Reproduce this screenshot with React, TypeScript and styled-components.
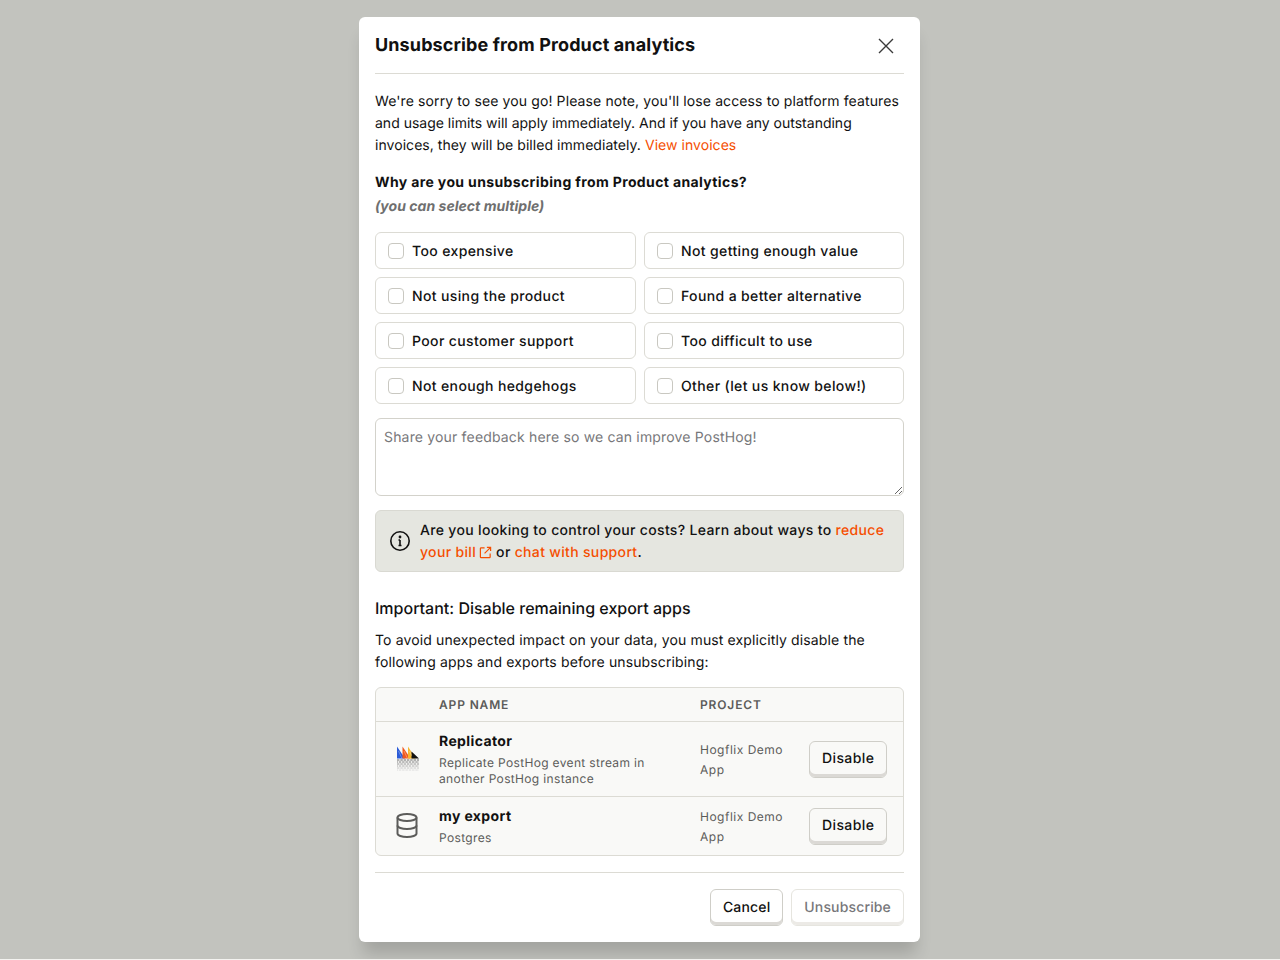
import React from "react";
import styled, { createGlobalStyle } from "styled-components";

const Global = createGlobalStyle`
  html, body { margin: 0; padding: 0; background: #f3f3f0; }
  body { font-family: Inter, "Liberation Sans", sans-serif; font-size: 14px; color: #111; text-rendering: geometricPrecision; }
  textarea, button { text-rendering: geometricPrecision; }
  * { box-sizing: border-box; }
`;

const Overlay = styled.div`
  height: 959px;
  background: #c2c3be;
  display: flex;
  justify-content: center;
  align-items: flex-start;
  padding-top: 17px;
  overflow: hidden;
`;

const Modal = styled.div`
  width: 561px;
  margin-left: -1px;
  height: 925px;
  background: #fff;
  border-radius: 6px;
  padding: 0 16px;
  box-shadow: 0 16px 16px -4px rgba(0, 0, 0, 0.16);
`;

const Header = styled.header`
  height: 57px;
  display: flex;
  align-items: center;
  justify-content: space-between;
  border-bottom: 1px solid #dcdbd4;
  padding-bottom: 1px;
`;

const Title = styled.h3`
  margin: 0;
  padding-top: 3px;
  font-size: 18px;
  line-height: 24px;
  font-weight: 700;
  letter-spacing: 0.12px;
  color: #111;
`;

const CloseButton = styled.button`
  width: 24px;
  height: 24px;
  margin: 2px 6px 0 0;
  padding: 0;
  background: none;
  border: none;
  color: #3b3b3b;
  display: flex;
  align-items: center;
  justify-content: center;
`;

const Intro = styled.p`
  margin: 17px 0 0;
  line-height: 22px;
  color: #111;
`;

const IntroLine = styled.span<{ $ls: number }>`
  display: block;
  white-space: nowrap;
  letter-spacing: ${(p) => p.$ls}px;
`;

const Link = styled.a`
  color: #f54e00;
  text-decoration: none;
`;

const Question = styled.h4`
  margin: 15px 0 0;
  font-size: 14px;
  line-height: 22px;
  font-weight: 700;
  letter-spacing: 0.37px;
`;

const Hint = styled.div`
  margin-top: 2px;
  font-size: 14px;
  line-height: 22px;
  font-weight: 700;
  font-style: italic;
  letter-spacing: 0.04px;
  color: #6f6f6f;
`;

const ReasonGrid = styled.div`
  margin-top: 14px;
  display: grid;
  grid-template-columns: 261px 260px;
  column-gap: 8px;
  row-gap: 8px;
`;

const Reason = styled.label`
  height: 37px;
  display: flex;
  align-items: center;
  gap: 8px;
  padding: 0 12px;
  background: #fff;
  border: 1px solid #dcdbd4;
  border-radius: 6px;
  font-weight: 500;
  letter-spacing: 0.37px;
  color: #111;
`;

const ReasonText = styled.span`
  padding-top: 2px;
`;

const Box = styled.span`
  width: 16px;
  height: 16px;
  border: 1px solid #c9c8c1;
  border-radius: 4px;
  background: #fff;
`;

const Feedback = styled.textarea`
  display: block;
  width: 100%;
  height: 78px;
  margin-top: 14px;
  padding: 8px;
  border: 1px solid #d3d2cb;
  border-radius: 6px;
  font: 400 14px/22px Inter, "Liberation Sans", sans-serif;
  letter-spacing: 0.17px;
  &::placeholder { color: #77777a; opacity: 1; }
`;

const Notice = styled.div`
  margin-top: 14px;
  height: 62px;
  display: flex;
  align-items: center;
  gap: 9px;
  padding: 0 13px;
  background: #e5e6e0;
  border: 1px solid #d9d9d2;
  border-radius: 6px;
  line-height: 22px;
  font-weight: 500;
  letter-spacing: 0.33px;
`;

const NoticeText = styled.div`
  flex: 1;
  padding-top: 2px;
`;

const ExternalIcon = styled.svg`
  width: 13px;
  height: 13px;
  vertical-align: -2px;
  margin-left: 3px;
`;

const SectionTitle = styled.h4`
  margin: 24px 0 0;
  font-size: 16px;
  line-height: 24px;
  font-weight: 500;
`;

const SectionText = styled.p`
  margin: 10px 0 0;
  line-height: 22px;
  letter-spacing: 0.13px;
`;

const Table = styled.div`
  margin-top: 13px;
  border: 1px solid #dcdbd4;
  border-radius: 6px;
  background: #f9f9f7;
  overflow: hidden;
`;

const Row = styled.div<{ $h: number }>`
  display: grid;
  grid-template-columns: 63px 261px 109px 1fr;
  align-items: center;
  height: ${(p) => p.$h}px;
  & + & { border-top: 1px solid #dcdbd4; }
`;

const HeadCell = styled.div`
  font-size: 12px;
  font-weight: 600;
  letter-spacing: 0.85px;
  color: #5c5c5a;
`;

const IconCell = styled.div`
  display: flex;
  justify-content: center;
`;

const AppName = styled.div`
  font-size: 14px;
  line-height: 22px;
  font-weight: 700;
  letter-spacing: 0.38px;
`;

const AppDesc = styled.div`
  font-size: 12px;
  line-height: 16px;
  letter-spacing: 0.34px;
  color: #5c5c5a;
  margin-top: 2px;
  padding-right: 24px;
`;

const ProjectCell = styled.div`
  font-size: 12px;
  line-height: 20px;
  letter-spacing: 0.5px;
  color: #5c5c5a;
  width: 92px;
  padding-top: 2px;
`;

const ActionCell = styled.div`
  display: flex;
  justify-content: flex-end;
  padding-right: 16px;
`;

const Button = styled.button<{ $disabled?: boolean; $bg?: string; $ls?: number }>`
  height: 37px;
  padding: 0 12px;
  background: ${(p) => p.$bg ?? "#fff"};
  border: 1px solid ${(p) => (p.$disabled ? "#e6e5df" : "#cfcec8")};
  border-radius: 6px;
  box-shadow: inset 0 -3px 0 ${(p) => (p.$disabled ? "#eceae6" : "#dbd9d5")};
  font: 500 14px/20px Inter, "Liberation Sans", sans-serif;
  letter-spacing: ${(p) => p.$ls ?? 0.15}px;
  color: ${(p) => (p.$disabled ? "#77777a" : "#111")};
`;

const Footer = styled.footer`
  margin-top: 16px;
  border-top: 1px solid #dcdbd4;
  padding-top: 16px;
  display: flex;
  justify-content: flex-end;
  gap: 8px;
`;

const reasons = [
  "Too expensive",
  "Not getting enough value",
  "Not using the product",
  "Found a better alternative",
  "Poor customer support",
  "Too difficult to use",
  "Not enough hedgehogs",
  "Other (let us know below!)",
];

const logoRows = [
  { y: 15, c: "#6a6a6a", o: 0 },
  { y: 17, c: "#7f7f7f", o: 1.5 },
  { y: 19, c: "#969696", o: 0 },
  { y: 21, c: "#acacac", o: 1.5 },
  { y: 23, c: "#c6c6c6", o: 0 },
  { y: 25, c: "#dcdcdc", o: 1.5 },
];

const ReplicatorLogo = () => (
  <svg width="24" height="28" viewBox="0 0 24 28">
    <path d="M1 1.5 L1 13.5 L9 13.5 Z" fill="#2b5bd7" />
    <path d="M6.5 1.5 L6.5 13.5 L14.5 13.5 Z" fill="#f0591e" />
    <path d="M12 1.5 L12 13.5 L19.5 13.5 Z" fill="#f5b731" />
    <path d="M15.5 6.5 L15.5 13.5 L23 13.5 Z" fill="#111" />
    <path d="M2.5 6L6 13.5" stroke="#8fabe9" strokeWidth="0.6" />
    <path d="M8 6L11.5 13.5" stroke="#f8b090" strokeWidth="0.6" />
    <path d="M13.5 6L15.5 10.5" stroke="#fbe0a0" strokeWidth="0.6" />
    {logoRows.map((r) => (
      <path key={r.y} d={`M1 ${r.y}h22`} stroke={r.c} strokeDasharray="2.5 0.8" strokeDashoffset={r.o} />
    ))}
  </svg>
);

const DatabaseIcon = () => (
  <svg width="24" height="28" viewBox="1 0 24 28" fill="none" stroke="#5c5c5a" strokeWidth="2">
    <ellipse cx="12" cy="5.5" rx="9.5" ry="3.6" />
    <path d="M2.5 5.5v16c0 2 4.3 3.6 9.5 3.6s9.5-1.6 9.5-3.6v-16" />
    <path d="M2.5 13.5c0 2 4.3 3.6 9.5 3.6s9.5-1.6 9.5-3.6" />
  </svg>
);

export default function App() {
  return (
    <>
      <Global />
      <Overlay>
        <Modal>
          <Header>
            <Title>Unsubscribe from Product analytics</Title>
            <CloseButton aria-label="Close">
              <svg width="16" height="16" viewBox="0 0 16 16" fill="none" stroke="currentColor" strokeWidth="1.4">
                <path d="M1 1l14 14M15 1L1 15" />
              </svg>
            </CloseButton>
          </Header>
          <Intro>
            <IntroLine $ls={0.114}>
              We're sorry to see you go! Please note, you'll lose access to platform features
            </IntroLine>
            <IntroLine $ls={0}>and usage limits will apply immediately. And if you have any outstanding</IntroLine>
            <IntroLine $ls={0.05}>
              invoices, they will be billed immediately. <Link>View invoices</Link>
            </IntroLine>
          </Intro>
          <Question>Why are you unsubscribing from Product analytics?</Question>
          <Hint>(you can select multiple)</Hint>
          <ReasonGrid>
            {reasons.map((r) => (
              <Reason key={r}>
                <Box />
                <ReasonText>{r}</ReasonText>
              </Reason>
            ))}
          </ReasonGrid>
          <Feedback placeholder="Share your feedback here so we can improve PostHog!" />
          <Notice>
            <svg width="22" height="22" viewBox="0 0 22 22" fill="none" stroke="#111" strokeWidth="1.6">
              <circle cx="11" cy="11" r="9.2" />
              <path d="M11 10v5.5M9.5 15.5h3M9.5 10H11" />
              <circle cx="11" cy="7" r="0.6" fill="#111" />
            </svg>
            <NoticeText>
              Are you looking to control your costs? Learn about ways to{" "}
              <Link>
                reduce your bill
                <ExternalIcon viewBox="0 0 14 14" fill="none" stroke="#f54e00" strokeWidth="1.3">
                  <path d="M6 2H2.2a.7.7 0 0 0-.7.7v9.1c0 .4.3.7.7.7h9.1a.7.7 0 0 0 .7-.7V8M8.5 1.5h4v4M12.5 1.5L6 8" />
                </ExternalIcon>
              </Link>{" "}
              or <Link>chat with support</Link>.
            </NoticeText>
          </Notice>
          <SectionTitle>Important: Disable remaining export apps</SectionTitle>
          <SectionText>
            To avoid unexpected impact on your data, you must explicitly disable the following apps and exports before
            unsubscribing:
          </SectionText>
          <Table>
            <Row $h={33}>
              <div />
              <HeadCell>APP NAME</HeadCell>
              <HeadCell>PROJECT</HeadCell>
              <div />
            </Row>
            <Row $h={75}>
              <IconCell>
                <ReplicatorLogo />
              </IconCell>
              <div>
                <AppName>Replicator</AppName>
                <AppDesc>Replicate PostHog event stream in another PostHog instance</AppDesc>
              </div>
              <ProjectCell>Hogflix Demo App</ProjectCell>
              <ActionCell>
                <Button $bg="#f9f9f7" $ls={0.4}>Disable</Button>
              </ActionCell>
            </Row>
            <Row $h={59}>
              <IconCell>
                <DatabaseIcon />
              </IconCell>
              <div>
                <AppName>my export</AppName>
                <AppDesc>Postgres</AppDesc>
              </div>
              <ProjectCell>Hogflix Demo App</ProjectCell>
              <ActionCell>
                <Button $bg="#f9f9f7" $ls={0.4}>Disable</Button>
              </ActionCell>
            </Row>
          </Table>
          <Footer>
            <Button>Cancel</Button>
            <Button $disabled>Unsubscribe</Button>
          </Footer>
        </Modal>
      </Overlay>
    </>
  );
}
